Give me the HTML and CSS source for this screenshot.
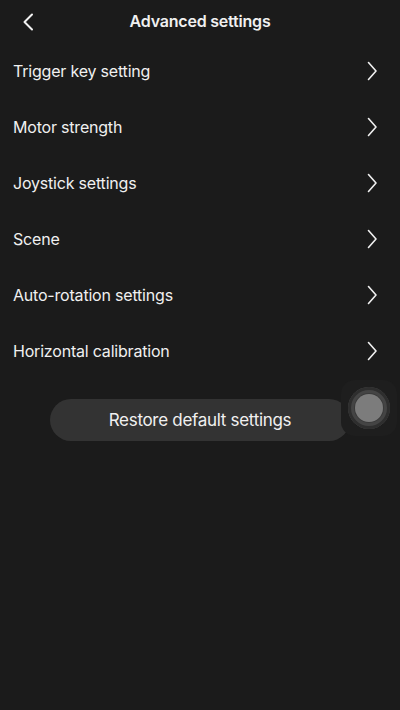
FILE: index.html
```html
<!DOCTYPE html>
<html>
<head>
  <title>Advanced settings</title>
  <link rel="stylesheet" href="styles.css">
</head>
<body>
  <div class="screen">
    <div class="header">
      <svg class="back" width="12" height="18" viewBox="0 0 12 18"><path d="M10 1.5 L2.5 9 L10 16.5" fill="none" stroke="#f2f2f2" stroke-width="2" stroke-linecap="round" stroke-linejoin="round"/></svg>
      <h1>Advanced settings</h1>
    </div>

    <ul class="menu">
      <li>Trigger key setting <svg class="chev" width="11" height="20" viewBox="0 0 11 20"><path d="M1.5 1.5 L9 10 L1.5 18.5" /></svg></li>
      <li>Motor strength <svg class="chev" width="11" height="20" viewBox="0 0 11 20"><path d="M1.5 1.5 L9 10 L1.5 18.5" /></svg></li>
      <li>Joystick settings <svg class="chev" width="11" height="20" viewBox="0 0 11 20"><path d="M1.5 1.5 L9 10 L1.5 18.5" /></svg></li>
      <li>Scene <svg class="chev" width="11" height="20" viewBox="0 0 11 20"><path d="M1.5 1.5 L9 10 L1.5 18.5" /></svg></li>
      <li>Auto-rotation settings <svg class="chev" width="11" height="20" viewBox="0 0 11 20"><path d="M1.5 1.5 L9 10 L1.5 18.5" /></svg></li>
      <li>Horizontal calibration <svg class="chev" width="11" height="20" viewBox="0 0 11 20"><path d="M1.5 1.5 L9 10 L1.5 18.5" /></svg></li>
    </ul>

    <div class="actions">
      <button class="restore">Restore default settings</button>
    </div>

    <!-- assistive touch -->
    <div class="touch">
      <div class="ring"><div class="dot"></div></div>
    </div>
  </div>
</body>
</html>
```

FILE: styles.css
```css
body {
  margin: 0;
  background: #1b1b1b;
  font-family: Inter, "Noto Sans", sans-serif;
  color: #f0f0f0;
}

.screen {
  position: relative;
  height: 710px;
}

.header {
  position: relative;
  height: 43px;
  display: flex;
  align-items: center;
  justify-content: center;
}

.header h1 {
  margin: 0;
  font-size: 16px;
  font-weight: 600;
  letter-spacing: -0.2px;
  margin-top: -1px;
}

.back {
  position: absolute;
  left: 22px;
  top: 13px;
}

.menu {
  list-style: none;
  margin: 0;
  padding: 0;
}

.menu li {
  height: 56px;
  display: flex;
  align-items: center;
  justify-content: space-between;
  padding: 0 22px 0 13px;
  font-size: 16px;
  letter-spacing: -0.2px;
}

.chev path {
  fill: none;
  stroke: #f0f0f0;
  stroke-width: 1.6;
  stroke-linecap: round;
  stroke-linejoin: round;
}

.actions {
  display: flex;
  justify-content: center;
  margin-top: 20px;
}

.restore {
  width: 300px;
  height: 42px;
  border: none;
  border-radius: 21px;
  background: #333;
  color: #f0f0f0;
  font-family: Inter, "Noto Sans", sans-serif;
  font-size: 17px;
  letter-spacing: -0.3px;
  padding-top: 1px;
}

.touch {
  position: absolute;
  left: 341px;
  top: 380px;
  width: 56px;
  height: 56px;
  border-radius: 14px;
  background: #1e1e1e;
  display: flex;
  align-items: center;
  justify-content: center;
}

.ring {
  width: 42px;
  height: 42px;
  border-radius: 50%;
  background: #3a3a3a;
  box-shadow: inset 0 0 0 3px #2e2e2e, inset 0 0 0 6px #444;
  display: flex;
  align-items: center;
  justify-content: center;
}

.dot {
  width: 28px;
  height: 28px;
  border-radius: 50%;
  background: #7c7c7c;
}
```
